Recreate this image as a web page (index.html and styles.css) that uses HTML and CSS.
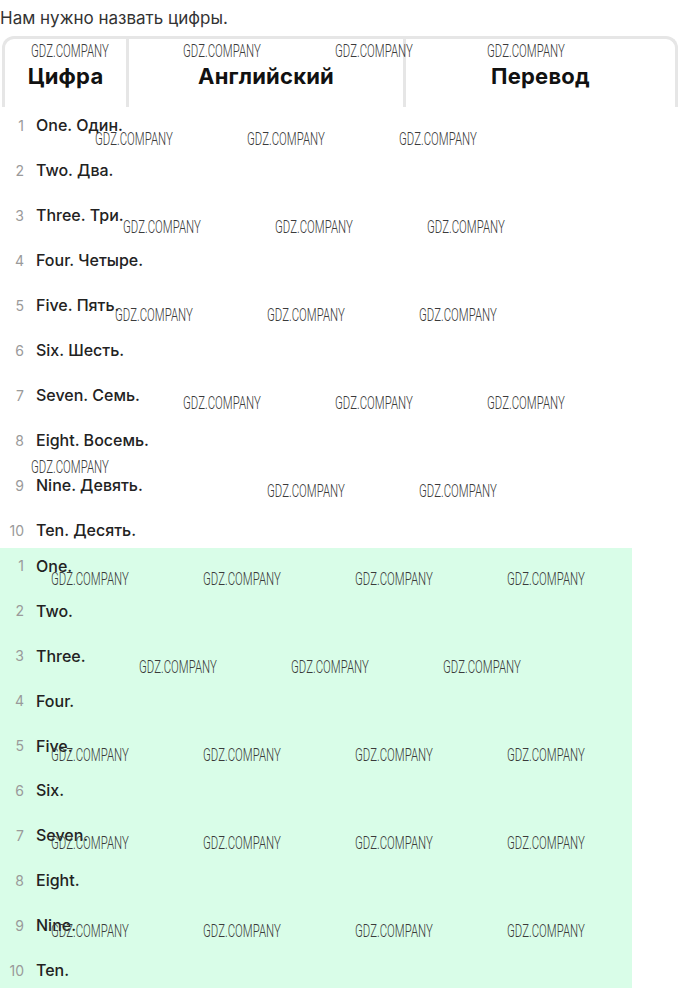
FILE: index.html
```html
<!DOCTYPE html>
<html lang="ru">
<head>
<meta charset="utf-8">
<title>Цифры</title>
<link rel="stylesheet" href="styles.css">
</head>
<body>
<div class="page">
  <p class="title">Нам нужно назвать цифры.</p>
  <div class="table">
    <div class="thead">
      <div class="th">Цифра</div>
      <div class="th">Английский</div>
      <div class="th">Перевод</div>
    </div>
    <ol class="rows">
      <li class="row"><span class="num">1</span><span class="txt">One. Один.</span></li>
      <li class="row"><span class="num">2</span><span class="txt">Two. Два.</span></li>
      <li class="row"><span class="num">3</span><span class="txt">Three. Три.</span></li>
      <li class="row"><span class="num">4</span><span class="txt">Four. Четыре.</span></li>
      <li class="row"><span class="num">5</span><span class="txt">Five. Пять.</span></li>
      <li class="row"><span class="num">6</span><span class="txt">Six. Шесть.</span></li>
      <li class="row"><span class="num">7</span><span class="txt">Seven. Семь.</span></li>
      <li class="row"><span class="num">8</span><span class="txt">Eight. Восемь.</span></li>
      <li class="row"><span class="num">9</span><span class="txt">Nine. Девять.</span></li>
      <li class="row"><span class="num">10</span><span class="txt">Ten. Десять.</span></li>
    </ol>
    <ol class="rows green">
      <li class="row"><span class="num">1</span><span class="txt">One.</span></li>
      <li class="row"><span class="num">2</span><span class="txt">Two.</span></li>
      <li class="row"><span class="num">3</span><span class="txt">Three.</span></li>
      <li class="row"><span class="num">4</span><span class="txt">Four.</span></li>
      <li class="row"><span class="num">5</span><span class="txt">Five.</span></li>
      <li class="row"><span class="num">6</span><span class="txt">Six.</span></li>
      <li class="row"><span class="num">7</span><span class="txt">Seven.</span></li>
      <li class="row"><span class="num">8</span><span class="txt">Eight.</span></li>
      <li class="row"><span class="num">9</span><span class="txt">Nine.</span></li>
      <li class="row"><span class="num">10</span><span class="txt">Ten.</span></li>
    </ol>
  </div>
  <div class="wm-layer">
    <span class="wm" style="left:31px;top:41px">GDZ.COMPANY</span>
    <span class="wm" style="left:183px;top:41px">GDZ.COMPANY</span>
    <span class="wm" style="left:335px;top:41px">GDZ.COMPANY</span>
    <span class="wm" style="left:487px;top:41px">GDZ.COMPANY</span>
    <span class="wm" style="left:95px;top:129px">GDZ.COMPANY</span>
    <span class="wm" style="left:247px;top:129px">GDZ.COMPANY</span>
    <span class="wm" style="left:399px;top:129px">GDZ.COMPANY</span>
    <span class="wm" style="left:123px;top:217px">GDZ.COMPANY</span>
    <span class="wm" style="left:275px;top:217px">GDZ.COMPANY</span>
    <span class="wm" style="left:427px;top:217px">GDZ.COMPANY</span>
    <span class="wm" style="left:115px;top:305px">GDZ.COMPANY</span>
    <span class="wm" style="left:267px;top:305px">GDZ.COMPANY</span>
    <span class="wm" style="left:419px;top:305px">GDZ.COMPANY</span>
    <span class="wm" style="left:183px;top:393px">GDZ.COMPANY</span>
    <span class="wm" style="left:335px;top:393px">GDZ.COMPANY</span>
    <span class="wm" style="left:487px;top:393px">GDZ.COMPANY</span>
    <span class="wm" style="left:31px;top:457px">GDZ.COMPANY</span>
    <span class="wm" style="left:267px;top:481px">GDZ.COMPANY</span>
    <span class="wm" style="left:419px;top:481px">GDZ.COMPANY</span>
    <span class="wm" style="left:51px;top:569px">GDZ.COMPANY</span>
    <span class="wm" style="left:203px;top:569px">GDZ.COMPANY</span>
    <span class="wm" style="left:355px;top:569px">GDZ.COMPANY</span>
    <span class="wm" style="left:507px;top:569px">GDZ.COMPANY</span>
    <span class="wm" style="left:139px;top:657px">GDZ.COMPANY</span>
    <span class="wm" style="left:291px;top:657px">GDZ.COMPANY</span>
    <span class="wm" style="left:443px;top:657px">GDZ.COMPANY</span>
    <span class="wm" style="left:51px;top:745px">GDZ.COMPANY</span>
    <span class="wm" style="left:203px;top:745px">GDZ.COMPANY</span>
    <span class="wm" style="left:355px;top:745px">GDZ.COMPANY</span>
    <span class="wm" style="left:507px;top:745px">GDZ.COMPANY</span>
    <span class="wm" style="left:51px;top:833px">GDZ.COMPANY</span>
    <span class="wm" style="left:203px;top:833px">GDZ.COMPANY</span>
    <span class="wm" style="left:355px;top:833px">GDZ.COMPANY</span>
    <span class="wm" style="left:507px;top:833px">GDZ.COMPANY</span>
    <span class="wm" style="left:51px;top:921px">GDZ.COMPANY</span>
    <span class="wm" style="left:203px;top:921px">GDZ.COMPANY</span>
    <span class="wm" style="left:355px;top:921px">GDZ.COMPANY</span>
    <span class="wm" style="left:507px;top:921px">GDZ.COMPANY</span>
  </div>
</div>
</body>
</html>
```
FILE: styles.css
```css
html, body {
  margin: 0;
  padding: 0;
  background: #ffffff;
}
body {
  font-family: Inter, "Noto Sans", Roboto, sans-serif;
  color: #222222;
  overflow: hidden;
}
.page {
  position: relative;
  width: 680px;
  height: 988px;
}
.title {
  margin: 0;
  padding-top: 8px;
  font-size: 17px;
  line-height: 20px;
  color: #333333;
}
.table {
  margin-top: 8px;
}
.thead {
  display: grid;
  grid-template-columns: 121px 277px 1fr;
  height: 71px;
  margin: 0 2px;
  border: 3px solid #e6e6e6;
  border-bottom: none;
  border-radius: 12px 12px 0 0;
  box-sizing: border-box;
}
.th {
  display: flex;
  align-items: center;
  justify-content: center;
  padding-top: 5px;
  font-size: 22px;
  font-weight: 700;
  color: #111111;
  letter-spacing: 0.2px;
}
.th + .th {
  border-left: 3px solid #e6e6e6;
}
.rows {
  list-style: none;
  margin: 0;
  padding: 0;
  display: flex;
  flex-direction: column;
  gap: 9px;
}
.rows.green {
  background: #d9fde8;
  width: 632px;
  height: 440px;
}
.row {
  display: flex;
  align-items: center;
  height: 36px;
}
.num {
  width: 24px;
  text-align: right;
  font-size: 14px;
  color: #9a9a9a;
  flex: none;
}
.txt {
  margin-left: 12px;
  font-size: 16px;
  font-weight: 500;
  color: #222222;
}
.wm-layer {
  position: absolute;
  inset: 0;
  pointer-events: none;
}
.wm {
  position: absolute;
  font-family: Roboto, "Liberation Sans", sans-serif;
  font-weight: 300;
  font-size: 19px;
  line-height: 20px;
  color: #3a3a3a;
  white-space: nowrap;
  transform: scaleX(0.6);
  transform-origin: left center;
}
```
